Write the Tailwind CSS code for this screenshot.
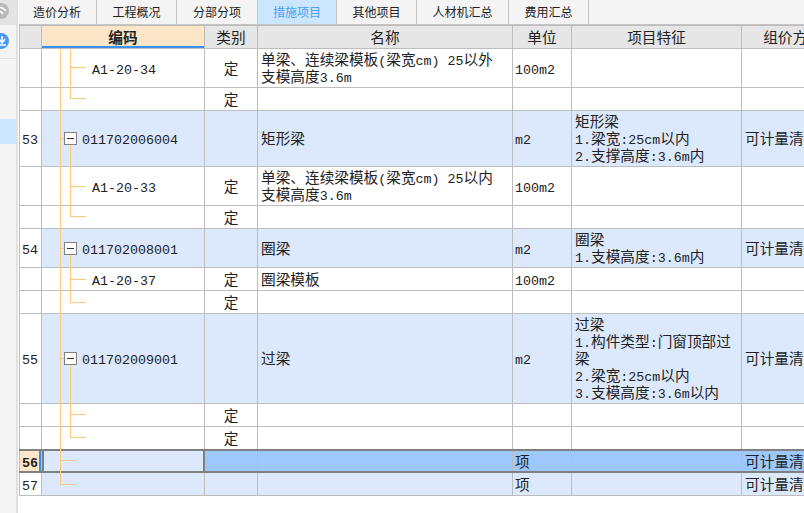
<!DOCTYPE html>
<html lang="zh-CN">

<head>
    <meta charset="UTF-8">
    <title>措施项目</title>
    <script src="https://cdn.jsdelivr.net/npm/@tailwindcss/browser@4"></script>
</head>

<body class="w-[804px] h-[513px] overflow-hidden bg-white flex text-[#222] font-['Noto_Sans_CJK_SC',sans-serif]">
    <!-- left rail -->
    <aside class="w-[19px] h-full shrink-0 flex flex-col bg-white">
        <div class="relative w-[16px] h-full bg-[#f4f4f4] flex flex-col">
            <div class="h-[25px] bg-[#e4e4e4] shrink-0">
                <svg width="16" height="25">
                    <circle cx="1" cy="11" r="8" fill="#b9b9b9" />
                    <path d="M-2 7q5 0 8 4M-2 11q3 0 5 3" stroke="#fff" stroke-width="1.5" fill="none" />
                </svg>
            </div>
            <div class="h-[34px] border-b border-[#e0e0e0] shrink-0">
                <svg width="16" height="33">
                    <circle cx="1" cy="16" r="8" fill="#4a9af5" />
                    <path d="M2 11v6M-1 14l3 4 3-4M-2 20h8" stroke="#fff" stroke-width="1.5" fill="none" />
                </svg>
            </div>
            <div class="mt-[60px] h-[25px] bg-[#cce6ff] shrink-0"></div>
        </div>
        <div class="absolute left-[16px] top-0 w-[2px] h-full bg-[#e0e0e0]"></div>
    </aside>

    <main class="relative flex-1 min-w-0 h-full overflow-hidden">
        <!-- tabs -->
        <nav class="relative h-[25px] ml-[-2px] flex bg-[#f4f4f4] border-b border-[#c4c4c4] text-[12px] leading-[24px] text-center">
            <a class="w-[80px] border-x border-[#c4c4c4]">造价分析</a>
            <a class="w-[80px] border-r border-[#c4c4c4]">工程概况</a>
            <a class="w-[81px] border-r border-[#c4c4c4]">分部分项</a>
            <a class="w-[79px] border-r border-[#c4c4c4] bg-[#cce6ff] text-[#4a9ef5]">措施项目</a>
            <a class="w-[80px] border-r border-[#c4c4c4]">其他项目</a>
            <a class="w-[92px] border-r border-[#c4c4c4]">人材机汇总</a>
            <a class="w-[80px] border-r border-[#c4c4c4]">费用汇总</a>
        </nav>

        <!-- grid -->
        <table class="table-fixed border-collapse w-[824px] text-[14.67px] leading-[17px] [&_td]:border [&_td]:border-[#bdbdbd] [&_td]:p-0 [&_td]:pl-[3px] [&_td]:pb-[2px] [&_td]:align-middle [&_td:nth-child(1)]:pl-[2px]! [&_td:nth-child(5)]:pl-[2px]! [&_th]:border [&_th]:border-[#bdbdbd] [&_th]:pb-[2px] [&_th]:font-normal [&_i]:not-italic [&_i]:text-[13.33px] [&_i]:leading-[8px] [&_i]:font-['Liberation_Mono']">
            <colgroup>
                <col class="w-[22px]">
                <col class="w-[163px]">
                <col class="w-[53px]">
                <col class="w-[255px]">
                <col class="w-[59px]">
                <col class="w-[170px]">
                <col class="w-[102px]">
            </colgroup>
            <thead class="bg-[#e6e6e6]">
                <tr class="h-[23px]">
                    <th></th>
                    <th class="bg-[#fde6c8] font-bold! shadow-[inset_0_-2px_0_#3b8ff0]">编码</th>
                    <th>类别</th>
                    <th>名称</th>
                    <th>单位</th>
                    <th>项目特征</th>
                    <th class="whitespace-nowrap">组价方式</th>
                </tr>
            </thead>
            <tbody>
                <tr class="h-[39px]">
                    <td></td>
                    <td class="pl-[50px]!"><i>A1-20-34</i></td>
                    <td class="text-center pl-0!">定</td>
                    <td>单梁、连续梁模板<i>(</i>梁宽<i>cm) 25</i>以外<br>支模高度<i>3.6m</i></td>
                    <td><i>100m2</i></td>
                    <td></td>
                    <td></td>
                </tr>
                <tr class="h-[23px]">
                    <td></td>
                    <td></td>
                    <td class="text-center pl-0!">定</td>
                    <td></td>
                    <td></td>
                    <td></td>
                    <td></td>
                </tr>
                <tr class="h-[56px] bg-[#dce9fd]">
                    <td class="bg-white"><i>53</i></td>
                    <td class="pl-[40px]!"><i>011702006004</i></td>
                    <td></td>
                    <td>矩形梁</td>
                    <td><i>m2</i></td>
                    <td>矩形梁<br><i>1.</i>梁宽<i>:25cm</i>以内<br><i>2.</i>支撑高度<i>:3.6m</i>内</td>
                    <td class="whitespace-nowrap">可计量清单</td>
                </tr>
                <tr class="h-[39px]">
                    <td></td>
                    <td class="pl-[50px]!"><i>A1-20-33</i></td>
                    <td class="text-center pl-0!">定</td>
                    <td>单梁、连续梁模板<i>(</i>梁宽<i>cm) 25</i>以内<br>支模高度<i>3.6m</i></td>
                    <td><i>100m2</i></td>
                    <td></td>
                    <td></td>
                </tr>
                <tr class="h-[23px]">
                    <td></td>
                    <td></td>
                    <td class="text-center pl-0!">定</td>
                    <td></td>
                    <td></td>
                    <td></td>
                    <td></td>
                </tr>
                <tr class="h-[39px] bg-[#dce9fd]">
                    <td class="bg-white"><i>54</i></td>
                    <td class="pl-[40px]!"><i>011702008001</i></td>
                    <td></td>
                    <td>圈梁</td>
                    <td><i>m2</i></td>
                    <td>圈梁<br><i>1.</i>支模高度<i>:3.6m</i>内</td>
                    <td class="whitespace-nowrap">可计量清单</td>
                </tr>
                <tr class="h-[23px]">
                    <td></td>
                    <td class="pl-[50px]!"><i>A1-20-37</i></td>
                    <td class="text-center pl-0!">定</td>
                    <td>圈梁模板</td>
                    <td><i>100m2</i></td>
                    <td></td>
                    <td></td>
                </tr>
                <tr class="h-[23px]">
                    <td></td>
                    <td></td>
                    <td class="text-center pl-0!">定</td>
                    <td></td>
                    <td></td>
                    <td></td>
                    <td></td>
                </tr>
                <tr class="h-[90px] bg-[#dce9fd]">
                    <td class="bg-white"><i>55</i></td>
                    <td class="pl-[40px]!"><i>011702009001</i></td>
                    <td></td>
                    <td>过梁</td>
                    <td><i>m2</i></td>
                    <td>过梁<br><i>1.</i>构件类型<i>:</i>门窗顶部过<br>梁<br><i>2.</i>梁宽<i>:25cm</i>以内<br><i>3.</i>支模高度<i>:3.6m</i>以内</td>
                    <td class="whitespace-nowrap">可计量清单</td>
                </tr>
                <tr class="h-[23px]">
                    <td></td>
                    <td></td>
                    <td class="text-center pl-0!">定</td>
                    <td></td>
                    <td></td>
                    <td></td>
                    <td></td>
                </tr>
                <tr class="h-[23px]">
                    <td></td>
                    <td></td>
                    <td class="text-center pl-0!">定</td>
                    <td></td>
                    <td></td>
                    <td></td>
                    <td></td>
                </tr>
                <tr class="h-[23px] bg-[#9ec8fc]">
                    <td class="bg-[#fde6c8] shadow-[inset_-2px_0_0_#3b8ff0] font-bold"><i>56</i></td>
                    <td class="bg-[#dce9fd]"></td>
                    <td></td>
                    <td></td>
                    <td>项</td>
                    <td></td>
                    <td class="whitespace-nowrap">可计量清单</td>
                </tr>
                <tr class="h-[23px] bg-[#dce9fd]">
                    <td class="bg-white"><i>57</i></td>
                    <td></td>
                    <td></td>
                    <td></td>
                    <td>项</td>
                    <td></td>
                    <td class="whitespace-nowrap">可计量清单</td>
                </tr>
            </tbody>
        </table>

        <!-- selected row outline -->
        <div class="absolute left-0 top-[449px] w-full h-[24px] border-y-2 border-[#808080] pointer-events-none"></div>
        <div class="absolute left-[23px] top-[449px] w-[163px] h-[24px] border-2 border-[#808080] pointer-events-none"></div>

        <!-- tree lines, coords are relative to main (x - 19) -->
        <svg class="absolute left-0 top-0 pointer-events-none" width="100" height="513" shape-rendering="crispEdges">
            <g stroke="#ffc97a" fill="none">
                <path d="M41.5 49V484H57" />
                <path d="M41.5 460.5H57" />
                <path d="M51.5 49V98.5H67M51.5 67.5H67" />
                <path d="M41.5 138.5H45M51.5 145V216.5H67M51.5 186.5H67" />
                <path d="M41.5 248.5H45M51.5 255V302.5H67M51.5 279.5H67" />
                <path d="M41.5 358.5H45M51.5 365V437.5H67M51.5 414.5H67" />
            </g>
            <g fill="#fff" stroke="#808080">
                <rect x="45.5" y="132.5" width="12" height="12" />
                <rect x="45.5" y="242.5" width="12" height="12" />
                <rect x="45.5" y="352.5" width="12" height="12" />
            </g>
            <path d="M48 138.5h7M48 248.5h7M48 358.5h7" stroke="#333" />
        </svg>
    </main>
</body>

</html>
